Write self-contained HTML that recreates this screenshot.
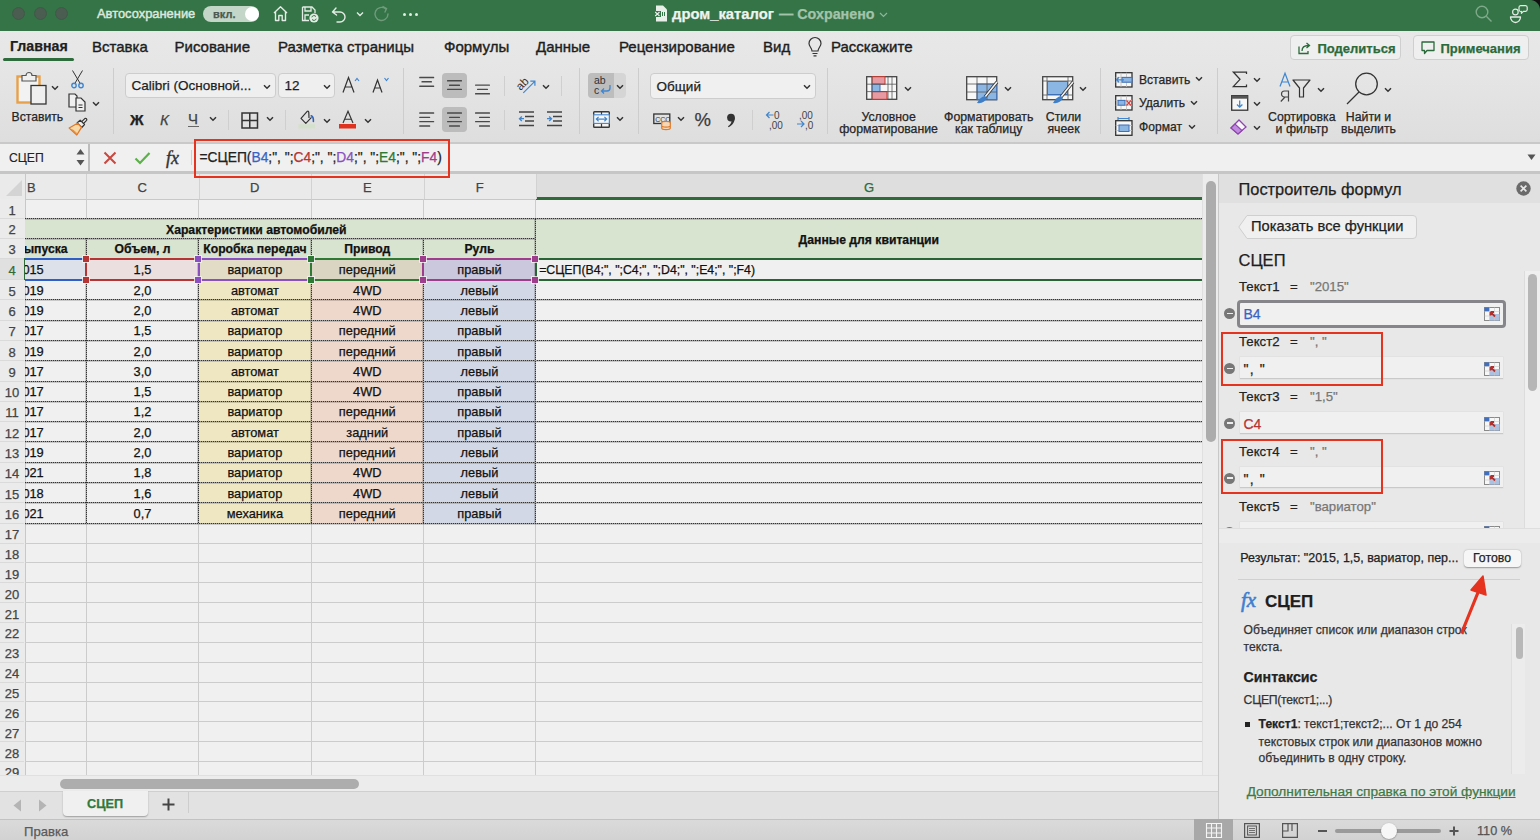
<!DOCTYPE html><html><head><meta charset="utf-8"><style>
*{box-sizing:border-box;margin:0;padding:0}
html,body{width:1540px;height:840px;overflow:hidden;background:#e6e6e6;font-family:"Liberation Sans",sans-serif;color:#262626}
.a{position:absolute}
.t{position:absolute;white-space:pre;line-height:1;-webkit-text-stroke-width:0.25px}
svg{position:absolute;overflow:visible}
</style></head><body>
<div class="a" style="left:0;top:0;width:1540px;height:31px;background:#357447"></div>
<div class="a" style="left:11.5px;top:7px;width:13px;height:13px;border-radius:50%;background:#4b5c50;border:1px solid #3f5a47"></div>
<div class="a" style="left:33.5px;top:7px;width:13px;height:13px;border-radius:50%;background:#4b5c50;border:1px solid #3f5a47"></div>
<div class="a" style="left:54.5px;top:7px;width:13px;height:13px;border-radius:50%;background:#4b5c50;border:1px solid #3f5a47"></div>
<div class="t" style="left:97px;top:8.3px;font-size:12.9px;color:#dce8df;-webkit-text-stroke-width:0.45px">Автосохранение</div>
<div class="a" style="left:203px;top:6px;width:56px;height:16px;border-radius:8px;background:#c3d6c8"></div>
<div class="t" style="left:213px;top:8.5px;font-size:11px;font-weight:bold;color:#4d5a50">вкл.</div>
<div class="a" style="left:245px;top:7px;width:14px;height:14px;border-radius:50%;background:#fff"></div>
<svg style="left:272px;top:5px" width="17" height="17" viewBox="0 0 17 17"><path d="M2 8 L8.5 1.8 L15 8 M3.5 6.8 V15.5 H6.8 V10.5 H10.2 V15.5 H13.5 V6.8" fill="none" stroke="#e3ece5" stroke-width="1.4" stroke-linejoin="round"/></svg>
<svg style="left:301px;top:5px" width="19" height="18" viewBox="0 0 19 18"><path d="M1.5 2 H11 L14 5 V8 M8 15.5 H1.5 V2 M4 2 V6 H10 V2 M4 15.5 V10 H8" fill="none" stroke="#e3ece5" stroke-width="1.3"/><circle cx="13" cy="13" r="4.6" fill="#e3ece5"/><path d="M10.8 12.3 a2.3 2.3 0 0 1 4.2 -0.6 M15.2 13.7 a2.3 2.3 0 0 1 -4.2 0.6" fill="none" stroke="#357447" stroke-width="1"/></svg>
<svg style="left:331px;top:5px" width="16" height="18" viewBox="0 0 16 18"><path d="M1.5 7 L5 3 M1.5 7 L5.5 10 M1.5 7 H9 A5 5 0 0 1 9 17 L6 17" fill="none" stroke="#e3ece5" stroke-width="1.4" stroke-linecap="round"/></svg>
<svg style="left:356px;top:11px" width="8" height="6" viewBox="0 0 8 6"><path d="M1 1.5 L4 4.5 L7 1.5" fill="none" stroke="#e3ece5" stroke-width="1.4"/></svg>
<svg style="left:373px;top:5px" width="18" height="18" viewBox="0 0 18 18"><path d="M15 9 A6.5 6.5 0 1 1 12.5 3.8 M10 1.5 L13.5 3.5 L12 7" fill="none" stroke="#6f9b7b" stroke-width="1.4" stroke-linecap="round"/></svg>
<div class="a" style="left:403.0px;top:12.5px;width:3px;height:3px;border-radius:50%;background:#e3ece5"></div>
<div class="a" style="left:409.0px;top:12.5px;width:3px;height:3px;border-radius:50%;background:#e3ece5"></div>
<div class="a" style="left:415.0px;top:12.5px;width:3px;height:3px;border-radius:50%;background:#e3ece5"></div>
<svg style="left:654px;top:5px" width="14" height="17" viewBox="0 0 14 17"><path d="M2 0.5 H9 L13 4.5 V16.5 H2 Z" fill="#e8efe9"/><rect x="0" y="6" width="7" height="6" fill="#357447"/><path d="M1.2 7 L5.5 11 M5.5 7 L1.2 11" stroke="#e8efe9" stroke-width="1.1"/><path d="M8.5 7 V11 M10.5 7 V11" stroke="#357447" stroke-width="1"/></svg>
<div class="t" style="left:672px;top:6.5px;font-size:14.8px;font-weight:bold;color:#eef3ef">дром_каталог</div>
<div class="t" style="left:779px;top:6.8px;font-size:14.3px;font-weight:bold;color:#a3c3ab">— Сохранено</div>
<svg style="left:879px;top:11.5px" width="9" height="6" viewBox="0 0 9 6"><path d="M1 1 L4.5 4.5 L8 1" fill="none" stroke="#8fb59a" stroke-width="1.2"/></svg>
<svg style="left:1475px;top:5px" width="18" height="18" viewBox="0 0 18 18"><circle cx="7" cy="7" r="5.8" fill="none" stroke="#7ea98a" stroke-width="1.4"/><path d="M11.3 11.3 L16.5 16.5" stroke="#7ea98a" stroke-width="1.4"/></svg>
<svg style="left:1508px;top:3px" width="22" height="22" viewBox="0 0 22 22"><circle cx="7.4" cy="9" r="2.8" fill="none" stroke="#e3ece5" stroke-width="1.2"/><path d="M2.5 14 H12.5 A5 5.5 0 0 1 2.5 14 Z" fill="none" stroke="#e3ece5" stroke-width="1.3" stroke-linejoin="round"/><path d="M12.6 2.6 H17.6 A1.8 1.8 0 0 1 19.2 4.4 V6.8 A1.8 1.8 0 0 1 17.6 8.4 H15.4 L13.4 10.3 V8.4 A1.8 1.8 0 0 1 11 6.6 V4.4 A1.8 1.8 0 0 1 12.6 2.6 Z" fill="none" stroke="#e3ece5" stroke-width="1.2" stroke-linejoin="round"/></svg>
<div class="a" style="left:1530px;top:0;width:10px;height:10px;background:radial-gradient(circle at 0 100%,transparent 9.5px,#111 10.5px)"></div>
<div class="a" style="left:0;top:31px;width:1540px;height:111px;background:linear-gradient(#e8e8e8,#e5e5e5 40%,#dedede)"></div>
<div class="t" style="left:10px;top:38.5px;font-size:14.2px;font-weight:bold;color:#1e1e1e">Главная</div>
<div class="t" style="left:92px;top:38.6px;font-size:15px;color:#1e1e1e;-webkit-text-stroke-width:0.4px">Вставка</div>
<div class="t" style="left:174.5px;top:38.6px;font-size:15px;color:#1e1e1e;-webkit-text-stroke-width:0.4px">Рисование</div>
<div class="t" style="left:278px;top:38.6px;font-size:15px;color:#1e1e1e;-webkit-text-stroke-width:0.4px">Разметка страницы</div>
<div class="t" style="left:444px;top:38.6px;font-size:15px;color:#1e1e1e;-webkit-text-stroke-width:0.4px">Формулы</div>
<div class="t" style="left:536px;top:38.6px;font-size:15px;color:#1e1e1e;-webkit-text-stroke-width:0.4px">Данные</div>
<div class="t" style="left:619px;top:38.6px;font-size:15px;color:#1e1e1e;-webkit-text-stroke-width:0.4px">Рецензирование</div>
<div class="t" style="left:763px;top:38.6px;font-size:15px;color:#1e1e1e;-webkit-text-stroke-width:0.4px">Вид</div>
<div class="t" style="left:831px;top:38.6px;font-size:15px;color:#1e1e1e;-webkit-text-stroke-width:0.4px">Расскажите</div>
<div class="a" style="left:3px;top:58px;width:71px;height:3px;border-radius:2px;background:#2e6b3c"></div>
<svg style="left:807px;top:37px" width="16" height="20" viewBox="0 0 16 20"><path d="M5 14 C5 11 2 9.5 2 6.5 A6 6 0 0 1 14 6.5 C14 9.5 11 11 11 14 Z M5.5 16.5 H10.5 M6.5 18.8 H9.5" fill="none" stroke="#333" stroke-width="1.2"/></svg>
<div class="a" style="left:1289.5px;top:35px;width:111px;height:25px;border-radius:4px;background:#efefef;border:1px solid #cfcfcf"></div>
<div class="t" style="left:1317.5px;top:42px;font-size:13px;font-weight:bold;color:#2b6a3a">Поделиться</div>
<svg style="left:1298px;top:41px" width="14" height="14" viewBox="0 0 14 14"><path d="M1 5.5 V12.5 H10 V10" fill="none" stroke="#2b6a3a" stroke-width="1.3"/><path d="M4 10 C4 6 7 4.5 10.5 4.5 M8.5 2 L11.5 4.5 L8.5 7" fill="none" stroke="#2b6a3a" stroke-width="1.3"/></svg>
<div class="a" style="left:1412.5px;top:35px;width:116px;height:25px;border-radius:4px;background:#efefef;border:1px solid #cfcfcf"></div>
<div class="t" style="left:1440.5px;top:42px;font-size:13px;font-weight:bold;color:#2b6a3a">Примечания</div>
<svg style="left:1421px;top:41px" width="14" height="14" viewBox="0 0 14 14"><path d="M1 1 H13 V9.5 H6 L3.5 12.5 V9.5 H1 Z" fill="none" stroke="#2b6a3a" stroke-width="1.3" stroke-linejoin="round"/></svg>
<svg style="left:16px;top:72px" width="32" height="34" viewBox="0 0 32 34"><rect x="1.5" y="4.5" width="22" height="26" fill="#f2f2f2" stroke="#e8a14a" stroke-width="2.4"/><path d="M6 9 V3.5 H10 A3 3 0 0 1 16 3.5 H20 V9 Z" fill="#efefef" stroke="#555" stroke-width="1.2"/><rect x="15" y="13.5" width="15" height="18.5" fill="#efefef" stroke="#333" stroke-width="1.3"/></svg>
<svg style="left:51px;top:85px" width="8" height="6" viewBox="0 0 8 6"><path d="M1 1.2 L4 4.2 L7 1.2" fill="none" stroke="#333" stroke-width="1.5"/></svg>
<div class="t" style="left:11.5px;top:110.5px;font-size:12.2px;font-weight:normal;color:#262626;">Вставить</div>
<svg style="left:71px;top:70px" width="13" height="19" viewBox="0 0 13 19"><path d="M1.5 0.5 L9.5 14 M11.5 0.5 L3.5 14" stroke="#333" stroke-width="1"/><circle cx="3" cy="15.5" r="2.2" fill="none" stroke="#3f86d0" stroke-width="1.4"/><circle cx="10" cy="15.5" r="2.2" fill="none" stroke="#3f86d0" stroke-width="1.4"/></svg>
<svg style="left:68px;top:93px" width="19" height="19" viewBox="0 0 19 19"><path d="M1 1 H7 L9 3 V14 H1 Z" fill="#f0f0f0" stroke="#333" stroke-width="1.2"/><path d="M8 5 H13 L17 9 V18 H8 Z" fill="#f0f0f0" stroke="#333" stroke-width="1.2"/><path d="M10.5 12 H14.5 M10.5 14.5 H14.5" stroke="#333" stroke-width="1"/></svg>
<svg style="left:92px;top:101px" width="8" height="6" viewBox="0 0 8 6"><path d="M1 1.2 L4 4.2 L7 1.2" fill="none" stroke="#333" stroke-width="1.5"/></svg>
<svg style="left:68px;top:116px" width="20" height="20" viewBox="0 0 20 20"><path d="M12.2 7.2 L16.8 2.6 A1.3 1.3 0 0 1 18.6 4.4 L14 9 Z" fill="#eee" stroke="#333" stroke-width="1.2" stroke-linejoin="round"/><path d="M9.2 6.8 L12.2 4.2 L16.5 8.5 L13.8 11.5 Z" fill="#eee" stroke="#333" stroke-width="1.2" stroke-linejoin="round"/><path d="M1.2 12 L9.5 7.2 L13.5 11.3 L8.8 19 Z" fill="#f6d9a6" stroke="#e07b2a" stroke-width="1.3" stroke-linejoin="round"/><path d="M4.5 13.5 L9.5 18" stroke="#e07b2a" stroke-width="0.8"/></svg>
<div class="a" style="left:113px;top:68px;width:1px;height:66px;background:#cdcdcd"></div>
<div class="a" style="left:125px;top:73px;width:151px;height:25px;border-radius:4px;background:#efefef;border:1px solid #cdcdcd"></div>
<div class="t" style="left:131.5px;top:79px;font-size:13.5px;font-weight:normal;color:#1e1e1e;">Calibri (Основной...</div>
<svg style="left:263px;top:84px" width="8" height="6" viewBox="0 0 8 6"><path d="M1 1.2 L4 4.2 L7 1.2" fill="none" stroke="#333" stroke-width="1.5"/></svg>
<div class="a" style="left:278px;top:73px;width:57px;height:25px;border-radius:4px;background:#efefef;border:1px solid #cdcdcd"></div>
<div class="t" style="left:284.5px;top:79px;font-size:13.5px;font-weight:normal;color:#1e1e1e;">12</div>
<svg style="left:323px;top:84px" width="8" height="6" viewBox="0 0 8 6"><path d="M1 1.2 L4 4.2 L7 1.2" fill="none" stroke="#333" stroke-width="1.5"/></svg>
<svg style="left:342px;top:76px" width="18" height="17" viewBox="0 0 18 17"><path d="M1 16.5 L6.5 1.5 L12 16.5 M3 11 H10" fill="none" stroke="#333" stroke-width="1.2"/><path d="M13 5 L15 2.5 L17 5" fill="none" stroke="#3f86d0" stroke-width="1.2"/></svg>
<svg style="left:372px;top:76px" width="18" height="17" viewBox="0 0 18 17"><path d="M1 16.5 L5.5 4 L10 16.5 M2.8 12 H8.2" fill="none" stroke="#333" stroke-width="1.2"/><path d="M12.5 2 L14.5 4.5 L16.5 2" fill="none" stroke="#3f86d0" stroke-width="1.2"/></svg>
<div class="t" style="left:130px;top:112px;font-size:15px;font-weight:bold;color:#222;">Ж</div>
<div class="t" style="left:160px;top:112px;font-size:15px;font-weight:normal;color:#444;font-style:italic">К</div>
<div class="t" style="left:188px;top:111px;font-size:15px;font-weight:normal;color:#444;">Ч</div>
<div class="a" style="left:188px;top:126px;width:11px;height:1px;background:#666"></div>
<svg style="left:209px;top:116px" width="8" height="6" viewBox="0 0 8 6"><path d="M1 1.2 L4 4.2 L7 1.2" fill="none" stroke="#333" stroke-width="1.5"/></svg>
<div class="a" style="left:228px;top:110px;width:1px;height:20px;background:#cfcfcf"></div>
<svg style="left:241px;top:112px" width="18" height="17" viewBox="0 0 18 17"><rect x="1" y="1" width="15.5" height="15" fill="none" stroke="#333" stroke-width="1.5"/><path d="M8.75 1 V16 M1 8.5 H16.5" stroke="#333" stroke-width="1.5"/></svg>
<svg style="left:266px;top:116px" width="8" height="6" viewBox="0 0 8 6"><path d="M1 1.2 L4 4.2 L7 1.2" fill="none" stroke="#333" stroke-width="1.5"/></svg>
<div class="a" style="left:285px;top:110px;width:1px;height:20px;background:#cfcfcf"></div>
<svg style="left:296px;top:108px" width="22" height="22" viewBox="0 0 22 22"><path d="M15.5 9.3 L9.8 15.3 L5 10.3 L11 3.6 Q12.5 2.5 12.8 4.5 L13 10" fill="none" stroke="#333" stroke-width="1.2" stroke-linejoin="round"/><path d="M15.2 7.8 Q17.6 8.6 17.4 13.5" fill="none" stroke="#2f62b8" stroke-width="1.6" stroke-linecap="round"/><rect x="2.4" y="16.2" width="16.6" height="4.3" fill="#d5e2cb"/></svg>
<svg style="left:323px;top:117.5px" width="8" height="6" viewBox="0 0 8 6"><path d="M1 1.2 L4 4.2 L7 1.2" fill="none" stroke="#333" stroke-width="1.5"/></svg>
<svg style="left:338px;top:110px" width="20" height="20" viewBox="0 0 20 20"><path d="M5 13 L10 1.3 L15 13 M6.6 9.2 H13.4" fill="none" stroke="#333" stroke-width="1.15"/><rect x="1" y="14" width="17" height="4.5" fill="#e0301e"/></svg>
<svg style="left:364px;top:117.5px" width="8" height="6" viewBox="0 0 8 6"><path d="M1 1.2 L4 4.2 L7 1.2" fill="none" stroke="#333" stroke-width="1.5"/></svg>
<div class="a" style="left:403px;top:68px;width:1px;height:66px;background:#cdcdcd"></div>
<div class="a" style="left:442px;top:73px;width:25px;height:25.3px;border-radius:4px;background:#bcbcbc"></div>
<div class="a" style="left:442px;top:107.2px;width:25px;height:25.3px;border-radius:4px;background:#bcbcbc"></div>
<svg style="left:0;top:0" width="520" height="140" viewBox="0 0 520 140"><g fill="#4a4a4a"><rect x="419.2" y="76.8" width="15" height="1.4" rx="0.5"/><rect x="421.45" y="81.1" width="10.5" height="1.4" rx="0.5"/><rect x="419.2" y="85.5" width="15" height="1.4" rx="0.5"/><rect x="447.0" y="80.1" width="15" height="1.4" rx="0.5"/><rect x="449.0" y="84.5" width="11" height="1.4" rx="0.5"/><rect x="447.0" y="88.7" width="15" height="1.4" rx="0.5"/><rect x="475.0" y="84.39999999999999" width="15" height="1.4" rx="0.5"/><rect x="477.0" y="88.7" width="11" height="1.4" rx="0.5"/><rect x="475.0" y="93.0" width="15" height="1.4" rx="0.5"/><rect x="419.2" y="112.3" width="15" height="1.4" rx="0.5"/><rect x="419.2" y="116.7" width="11" height="1.4" rx="0.5"/><rect x="419.2" y="120.89999999999999" width="15" height="1.4" rx="0.5"/><rect x="419.2" y="125.3" width="11" height="1.4" rx="0.5"/><rect x="447.0" y="112.3" width="15" height="1.4" rx="0.5"/><rect x="449.0" y="116.7" width="11" height="1.4" rx="0.5"/><rect x="447.0" y="120.89999999999999" width="15" height="1.4" rx="0.5"/><rect x="449.0" y="125.3" width="11" height="1.4" rx="0.5"/><rect x="475" y="112.3" width="15" height="1.4" rx="0.5"/><rect x="479" y="116.7" width="11" height="1.4" rx="0.5"/><rect x="475" y="120.89999999999999" width="15" height="1.4" rx="0.5"/><rect x="479" y="125.3" width="11" height="1.4" rx="0.5"/></g></svg>
<div class="a" style="left:504px;top:76px;width:1px;height:20px;background:#cfcfcf"></div>
<svg style="left:515px;top:75px" width="24" height="22" viewBox="0 0 24 22"><text x="5.5" y="16" transform="rotate(-45 5.5 16)" font-family="Liberation Sans" font-size="11.5" fill="#333">ab</text><path d="M8.3 17.8 L19.8 6.3 M15.3 6.2 H19.9 V10.8" fill="none" stroke="#3f86d0" stroke-width="1.2"/></svg>
<svg style="left:542px;top:84px" width="8" height="6" viewBox="0 0 8 6"><path d="M1 1.2 L4 4.2 L7 1.2" fill="none" stroke="#333" stroke-width="1.5"/></svg>
<div class="a" style="left:561px;top:76px;width:1px;height:20px;background:#cfcfcf"></div>
<div class="a" style="left:504px;top:110px;width:1px;height:20px;background:#cfcfcf"></div>
<svg style="left:518px;top:111px" width="17" height="16" viewBox="0 0 17 16"><path d="M1 1 H16 M7 5.5 H16 M7 10 H16 M1 14.5 H16" stroke="#444" stroke-width="1.4"/><path d="M6 7.7 H1.5 M3.8 5.5 L1.5 7.7 L3.8 10" fill="none" stroke="#3f86d0" stroke-width="1.3"/></svg>
<svg style="left:546px;top:111px" width="17" height="16" viewBox="0 0 17 16"><path d="M1 1 H16 M7 5.5 H16 M7 10 H16 M1 14.5 H16" stroke="#444" stroke-width="1.4"/><path d="M1 7.7 H5.5 M3.2 5.5 L5.5 7.7 L3.2 10" fill="none" stroke="#3f86d0" stroke-width="1.3"/></svg>
<div class="a" style="left:579px;top:68px;width:1px;height:66px;background:#cdcdcd"></div>
<div class="a" style="left:588px;top:73px;width:38px;height:25px;border-radius:4px;background:#d5d5d5"></div>
<div class="a" style="left:588px;top:73px;width:25.5px;height:25px;border-radius:4px 0 0 4px;background:#bdbdbd"></div>
<svg style="left:594px;top:75px" width="18" height="21" viewBox="0 0 18 21"><text x="0" y="9" font-family="Liberation Sans" font-size="10.5" fill="#333">ab</text><text x="0" y="19" font-family="Liberation Sans" font-size="10.5" fill="#333">c</text><path d="M16 10 V13 A3 3 0 0 1 13 16 H7.5 M10 13.5 L7.5 16 L10 18.5" fill="none" stroke="#3f86d0" stroke-width="1.3"/></svg>
<svg style="left:616px;top:84px" width="8" height="6" viewBox="0 0 8 6"><path d="M1 1.2 L4 4.2 L7 1.2" fill="none" stroke="#333" stroke-width="1.5"/></svg>
<svg style="left:593px;top:111px" width="17" height="17" viewBox="0 0 17 17"><rect x="0.7" y="0.7" width="15.6" height="15.6" rx="0.8" fill="#f4f4f4" stroke="#3a3a3a" stroke-width="1.4"/><path d="M8.5 0.7 V4 M8.5 12.5 V16.3" stroke="#3a3a3a" stroke-width="1.2"/><rect x="0.7" y="3.8" width="15.6" height="8.6" fill="#f7f7f7" stroke="#3f86d0" stroke-width="1.1"/><path d="M3.3 8.1 H13.7 M5.6 5.9 L3.3 8.1 L5.6 10.3 M11.4 5.9 L13.7 8.1 L11.4 10.3" fill="none" stroke="#3f86d0" stroke-width="1.2"/></svg>
<svg style="left:616px;top:116px" width="8" height="6" viewBox="0 0 8 6"><path d="M1 1.2 L4 4.2 L7 1.2" fill="none" stroke="#333" stroke-width="1.5"/></svg>
<div class="a" style="left:638px;top:68px;width:1px;height:66px;background:#cdcdcd"></div>
<div class="a" style="left:650px;top:73px;width:166px;height:25.5px;border-radius:4px;background:#f0f0f0;border:1px solid #cdcdcd"></div>
<div class="t" style="left:656.5px;top:79.5px;font-size:13.5px;font-weight:normal;color:#1e1e1e;">Общий</div>
<svg style="left:803px;top:84px" width="8" height="6" viewBox="0 0 8 6"><path d="M1 1.2 L4 4.2 L7 1.2" fill="none" stroke="#333" stroke-width="1.5"/></svg>
<svg style="left:653px;top:112px" width="19" height="18" viewBox="0 0 19 18"><rect x="0.8" y="2" width="16" height="9.5" fill="none" stroke="#333" stroke-width="1.3"/><text x="2.2" y="9.6" font-family="Liberation Sans" font-size="7" fill="#333">CCC</text><ellipse cx="13" cy="11" rx="4.3" ry="1.6" fill="#f5d8b8" stroke="#e07b2a" stroke-width="1.2"/><path d="M8.7 11 V16 A4.3 1.6 0 0 0 17.3 16 V11 M8.7 13.5 A4.3 1.6 0 0 0 17.3 13.5" fill="#f5d8b8" stroke="#e07b2a" stroke-width="1.2"/></svg>
<svg style="left:677px;top:116px" width="8" height="6" viewBox="0 0 8 6"><path d="M1 1.2 L4 4.2 L7 1.2" fill="none" stroke="#333" stroke-width="1.5"/></svg>
<div class="t" style="left:694.5px;top:110.5px;font-size:18.5px;font-weight:normal;color:#3a3a3a;">%</div>
<svg style="left:726px;top:113px" width="11" height="15" viewBox="0 0 11 15"><circle cx="5" cy="4.6" r="3.9" fill="#333"/><path d="M8.8 4.6 C9 9 6.5 12.5 2.5 14.3 L2 13.3 C4.5 11.5 5.6 9.5 5.6 7.5 Z" fill="#333"/></svg>
<div class="a" style="left:752px;top:110px;width:1px;height:20px;background:#cfcfcf"></div>
<svg style="left:765px;top:110px" width="20" height="19" viewBox="0 0 20 19"><text x="9" y="9" font-family="Liberation Sans" font-size="10" fill="#444">0</text><text x="4" y="18.5" font-family="Liberation Sans" font-size="10" fill="#444">,00</text><path d="M8.5 5 H1.5 M4.5 2 L1.5 5 L4.5 8" fill="none" stroke="#3f86d0" stroke-width="1.2"/></svg>
<svg style="left:796px;top:110px" width="20" height="19" viewBox="0 0 20 19"><text x="3" y="9" font-family="Liberation Sans" font-size="10" fill="#444">,00</text><text x="9" y="18.5" font-family="Liberation Sans" font-size="10" fill="#444">,0</text><path d="M1 14 H8 M5 11 L8 14 L5 17" fill="none" stroke="#3f86d0" stroke-width="1.2"/></svg>
<div class="a" style="left:827px;top:68px;width:1px;height:66px;background:#cdcdcd"></div>
<svg style="left:866px;top:76px" width="32" height="24" viewBox="0 0 32 24"><rect x="0.7" y="0.7" width="30" height="22.6" fill="#f7f7f7" stroke="#444" stroke-width="1.3"/><rect x="6" y="0.7" width="13" height="7.5" fill="#e89aa3" stroke="#c0392b" stroke-width="1"/><rect x="6" y="15.6" width="15" height="7.7" fill="#e89aa3" stroke="#c0392b" stroke-width="1"/><rect x="6" y="8.2" width="8" height="7.4" fill="#8bb6e3" stroke="#3f6fb5" stroke-width="1"/><path d="M6 0.7 V23.3 M22 0.7 V23.3 M26 0.7 V23.3 M0.7 8.2 H30.7 M0.7 15.6 H30.7" stroke="#555" stroke-width="0.8" fill="none"/></svg>
<svg style="left:904px;top:86px" width="8" height="6" viewBox="0 0 8 6"><path d="M1 1.2 L4 4.2 L7 1.2" fill="none" stroke="#333" stroke-width="1.5"/></svg>
<div class="t" style="left:828.6px;width:120px;text-align:center;top:110.5px;font-size:12.3px;color:#262626">Условное</div>
<div class="t" style="left:828.6px;width:120px;text-align:center;top:123px;font-size:12.3px;color:#262626">форматирование</div>
<svg style="left:966px;top:76px" width="33" height="29" viewBox="0 0 33 29"><rect x="0.7" y="0.7" width="30" height="23" fill="#f7f7f7" stroke="#444" stroke-width="1.3"/><rect x="11" y="8" width="19.7" height="15.7" fill="#8bb6e3" stroke="#3f6fb5" stroke-width="1"/><path d="M11 0.7 V23.7 M21 0.7 V23.7 M0.7 8 H30.7 M0.7 16 H30.7" stroke="#555" stroke-width="0.8"/><path d="M31 6 L19 21" stroke="#333" stroke-width="3.2"/><path d="M31 6 L19 21" stroke="#f3f3f3" stroke-width="1.6"/><path d="M19 20 Q14 21 11 27 Q18 28 21 22 Z" fill="#3f7fc8"/></svg>
<svg style="left:1004px;top:86px" width="8" height="6" viewBox="0 0 8 6"><path d="M1 1.2 L4 4.2 L7 1.2" fill="none" stroke="#333" stroke-width="1.5"/></svg>
<div class="t" style="left:928.7px;width:120px;text-align:center;top:110.5px;font-size:12.3px;color:#262626">Форматировать</div>
<div class="t" style="left:928.7px;width:120px;text-align:center;top:123px;font-size:12.3px;color:#262626">как таблицу</div>
<svg style="left:1042px;top:76px" width="33" height="29" viewBox="0 0 33 29"><rect x="0.7" y="0.7" width="30" height="23" fill="#f7f7f7" stroke="#444" stroke-width="1.3"/><path d="M5 0.7 V23.7 M26 0.7 V23.7 M0.7 5 H30.7 M0.7 19 H30.7" stroke="#555" stroke-width="0.8"/><rect x="5.5" y="5.5" width="20" height="13" fill="#8bb6e3" stroke="#3f6fb5" stroke-width="1"/><path d="M31 6 L19 21" stroke="#333" stroke-width="3.2"/><path d="M31 6 L19 21" stroke="#f3f3f3" stroke-width="1.6"/><path d="M19 20 Q14 21 11 27 Q18 28 21 22 Z" fill="#3f7fc8"/></svg>
<svg style="left:1079px;top:86px" width="8" height="6" viewBox="0 0 8 6"><path d="M1 1.2 L4 4.2 L7 1.2" fill="none" stroke="#333" stroke-width="1.5"/></svg>
<div class="t" style="left:1003.5px;width:120px;text-align:center;top:110.5px;font-size:12.3px;color:#262626">Стили</div>
<div class="t" style="left:1003.5px;width:120px;text-align:center;top:123px;font-size:12.3px;color:#262626">ячеек</div>
<div class="a" style="left:1100px;top:68px;width:1px;height:66px;background:#cdcdcd"></div>
<svg style="left:1115px;top:72px" width="18" height="16" viewBox="0 0 18 16"><rect x="0.7" y="0.7" width="16.3" height="14.3" fill="#f7f7f7" stroke="#333" stroke-width="1.3"/><path d="M6 0.7 V15 M11.5 0.7 V15 M0.7 5.4 H17 M0.7 10.2 H17" stroke="#bbb" stroke-width="0.8"/><rect x="7" y="5.4" width="10" height="4.8" fill="#8bb6e3" stroke="#3f6fb5" stroke-width="1"/><path d="M9 7.8 H1.5 M4 5.3 L1.5 7.8 L4 10.3" fill="none" stroke="#3f86d0" stroke-width="1.3"/></svg>
<div class="t" style="left:1139px;top:73.5px;font-size:12.1px;font-weight:normal;color:#262626;">Вставить</div>
<svg style="left:1195px;top:76px" width="8" height="6" viewBox="0 0 8 6"><path d="M1 1.2 L4 4.2 L7 1.2" fill="none" stroke="#333" stroke-width="1.5"/></svg>
<svg style="left:1115px;top:95px" width="18" height="16" viewBox="0 0 18 16"><rect x="0.7" y="0.7" width="16.3" height="14.3" fill="#f7f7f7" stroke="#333" stroke-width="1.3"/><path d="M6 0.7 V15 M11.5 0.7 V15 M0.7 5.4 H17 M0.7 10.2 H17" stroke="#bbb" stroke-width="0.8"/><rect x="3" y="5.4" width="7" height="4.8" fill="#8bb6e3" stroke="#3f6fb5" stroke-width="1"/><path d="M11.5 5.5 L16 10.5 M16 5.5 L11.5 10.5" stroke="#e03a3a" stroke-width="1.2"/></svg>
<div class="t" style="left:1139px;top:97px;font-size:12.1px;font-weight:normal;color:#262626;">Удалить</div>
<svg style="left:1190px;top:100px" width="8" height="6" viewBox="0 0 8 6"><path d="M1 1.2 L4 4.2 L7 1.2" fill="none" stroke="#333" stroke-width="1.5"/></svg>
<svg style="left:1115px;top:117px" width="18" height="19" viewBox="0 0 18 19"><path d="M3 1.5 H14 M3 0 V3 M14 0 V3" stroke="#3f86d0" stroke-width="1.2"/><rect x="0.7" y="3.7" width="16.3" height="14.6" fill="#f7f7f7" stroke="#333" stroke-width="1.3"/><path d="M0.7 8.5 H17 M0.7 13.5 H17" stroke="#bbb" stroke-width="0.8"/><rect x="4" y="8" width="10" height="6.5" fill="#8bb6e3" stroke="#3f6fb5" stroke-width="1"/></svg>
<div class="t" style="left:1139px;top:120.5px;font-size:12.1px;font-weight:normal;color:#262626;">Формат</div>
<svg style="left:1188px;top:124px" width="8" height="6" viewBox="0 0 8 6"><path d="M1 1.2 L4 4.2 L7 1.2" fill="none" stroke="#333" stroke-width="1.5"/></svg>
<div class="a" style="left:1217px;top:68px;width:1px;height:66px;background:#cdcdcd"></div>
<svg style="left:1232px;top:71px" width="16" height="17" viewBox="0 0 16 17"><path d="M14.5 3 V1 H1.3 L8 8.3 L1.3 15.6 H14.5 V13.6" fill="none" stroke="#333" stroke-width="1.25" stroke-linejoin="miter"/></svg>
<svg style="left:1253px;top:77px" width="8" height="6" viewBox="0 0 8 6"><path d="M1 1.2 L4 4.2 L7 1.2" fill="none" stroke="#333" stroke-width="1.5"/></svg>
<svg style="left:1231px;top:95px" width="18" height="16" viewBox="0 0 18 16"><rect x="0.7" y="0.7" width="16" height="14.5" fill="#f7f7f7" stroke="#333" stroke-width="1.3"/><rect x="0.7" y="0.7" width="16" height="3" fill="#555"/><path d="M8.7 5.5 V12 M6 9.5 L8.7 12.2 L11.4 9.5" fill="none" stroke="#3f86d0" stroke-width="1.3"/></svg>
<svg style="left:1253px;top:101px" width="8" height="6" viewBox="0 0 8 6"><path d="M1 1.2 L4 4.2 L7 1.2" fill="none" stroke="#333" stroke-width="1.5"/></svg>
<svg style="left:1230px;top:119px" width="18" height="16" viewBox="0 0 18 16"><path d="M1 9 L9 1 L16 8 L8 15 Z" fill="#f7f7f7" stroke="#8e44ad" stroke-width="1.3"/><path d="M1 9 L5 5 L12 11.5 L8 15 Z" fill="#c18be0" stroke="#8e44ad" stroke-width="1.1"/></svg>
<svg style="left:1253px;top:125px" width="8" height="6" viewBox="0 0 8 6"><path d="M1 1.2 L4 4.2 L7 1.2" fill="none" stroke="#333" stroke-width="1.5"/></svg>
<svg style="left:1279px;top:72px" width="13" height="31" viewBox="0 0 13 31"><path d="M1 14.5 L6 1.2 L11 14.5 M2.8 10 H9.2" fill="none" stroke="#3f86d0" stroke-width="1.2"/><path d="M9.5 29.5 V19 H5.5 A3 3 0 0 0 5.5 25 H9.5 M6 25 L1.8 29.5" fill="none" stroke="#444" stroke-width="1.2"/></svg>
<svg style="left:1292px;top:79px" width="20" height="20" viewBox="0 0 20 20"><path d="M1 1 H18 L11.5 9 V18 H7.5 V9 Z" fill="none" stroke="#333" stroke-width="1.2" stroke-linejoin="round"/></svg>
<svg style="left:1317px;top:87px" width="8" height="6" viewBox="0 0 8 6"><path d="M1 1.2 L4 4.2 L7 1.2" fill="none" stroke="#333" stroke-width="1.5"/></svg>
<div class="t" style="left:1241.8px;width:120px;text-align:center;top:110.5px;font-size:12.3px;color:#262626">Сортировка</div>
<div class="t" style="left:1241.8px;width:120px;text-align:center;top:123px;font-size:12.3px;color:#262626">и фильтр</div>
<svg style="left:1346px;top:72px" width="34" height="33" viewBox="0 0 34 33"><circle cx="20.5" cy="12" r="10.8" fill="none" stroke="#333" stroke-width="1.3"/><path d="M13 20 L1 32" stroke="#333" stroke-width="1.3"/></svg>
<svg style="left:1384px;top:87px" width="8" height="6" viewBox="0 0 8 6"><path d="M1 1.2 L4 4.2 L7 1.2" fill="none" stroke="#333" stroke-width="1.5"/></svg>
<div class="t" style="left:1308.5px;width:120px;text-align:center;top:110.5px;font-size:12.3px;color:#262626">Найти и</div>
<div class="t" style="left:1308.5px;width:120px;text-align:center;top:123px;font-size:12.3px;color:#262626">выделить</div>
<div class="a" style="left:0;top:142px;width:1540px;height:2px;background:#c9c9c9"></div>
<div class="a" style="left:0;top:144px;width:1540px;height:27px;background:#f0f0f0"></div>
<div class="a" style="left:0;top:171px;width:1540px;height:3px;background:#c6c6c6"></div>
<div class="a" style="left:88px;top:144px;width:1.5px;height:27px;background:#bdbdbd"></div>
<div class="t" style="left:9px;top:151.8px;font-size:12.2px;color:#222;-webkit-text-stroke:0.15px #222">СЦЕП</div>
<svg style="left:76px;top:148px" width="9" height="19" viewBox="0 0 9 19"><path d="M0.5 6.5 L4.5 1 L8.5 6.5 Z M0.5 12 L4.5 17.5 L8.5 12 Z" fill="#555"/></svg>
<svg style="left:103px;top:151px" width="14" height="14" viewBox="0 0 14 14"><path d="M1.5 1.5 L12.5 12.5 M12.5 1.5 L1.5 12.5" stroke="#c9473f" stroke-width="2"/></svg>
<svg style="left:134px;top:151px" width="17" height="14" viewBox="0 0 17 14"><path d="M1.5 7.5 L6 12 L15.5 2" fill="none" stroke="#5cb04a" stroke-width="2.2"/></svg>
<div class="t" style="left:166px;top:148.5px;font-family:'Liberation Serif',serif;font-style:italic;font-size:18px;color:#333;-webkit-text-stroke-width:0.4px">fx</div>
<div class="a" style="left:191px;top:150px;width:1px;height:15px;background:#cfcfcf"></div>
<div class="t" style="left:199.5px;top:151px;font-size:13.8px;color:#222"><span>=СЦЕП(</span><span style="color:#3a62c2">B4</span>;", ";<span style="color:#b53434">C4</span>;", ";<span style="color:#8a50bf">D4</span>;", ";<span style="color:#2e7a35">E4</span>;", ";<span style="color:#9e3d8b">F4</span>)</div>
<svg style="left:1527px;top:154px" width="9" height="7" viewBox="0 0 9 7"><path d="M0.5 0.5 H8.5 L4.5 6 Z" fill="#555"/></svg>
<div class="a" style="left:0;top:174px;width:1218px;height:601px;background:#f0f0f0"></div>
<div class="a" style="left:0;top:174px;width:1202px;height:25px;background:#eaeaea"></div>
<div class="a" style="left:0;top:198.5px;width:1202px;height:1.5px;background:#c8c8c8"></div>
<svg style="left:4px;top:180px" width="19" height="17" viewBox="0 0 19 17"><path d="M18 0 V16 H2 Z" fill="#d4d4d4"/></svg>
<div class="a" style="left:536px;top:174px;width:666px;height:25px;background:#dedede"></div>
<div class="a" style="left:536px;top:197px;width:666px;height:3px;background:#2e6b38"></div>
<div class="t" style="left:27px;top:180.5px;font-size:13px;color:#444">B</div>
<div class="t" style="left:86px;width:112.5px;text-align:center;top:180.5px;font-size:13px;color:#444">C</div>
<div class="a" style="left:86px;top:174px;width:1px;height:25px;background:#d2d2d2"></div>
<div class="t" style="left:198.5px;width:112.5px;text-align:center;top:180.5px;font-size:13px;color:#444">D</div>
<div class="a" style="left:198.5px;top:174px;width:1px;height:25px;background:#d2d2d2"></div>
<div class="t" style="left:311px;width:112.5px;text-align:center;top:180.5px;font-size:13px;color:#444">E</div>
<div class="a" style="left:311px;top:174px;width:1px;height:25px;background:#d2d2d2"></div>
<div class="t" style="left:423.5px;width:112.5px;text-align:center;top:180.5px;font-size:13px;color:#444">F</div>
<div class="a" style="left:423.5px;top:174px;width:1px;height:25px;background:#d2d2d2"></div>
<div class="t" style="left:536px;width:666px;text-align:center;top:180.5px;font-size:13px;color:#2e6b38">G</div>
<div class="a" style="left:536px;top:174px;width:1px;height:25px;background:#d2d2d2"></div>
<div class="a" style="left:0;top:199px;width:25px;height:576px;background:#ebebeb"></div>
<div class="a" style="left:24.5px;top:174px;width:1.5px;height:601px;background:#c8c8c8"></div>
<div class="t" style="left:0;width:24px;text-align:center;top:203.5px;font-size:13px;color:#444">1</div>
<div class="a" style="left:0;top:218px;width:24px;height:1px;background:#dadada"></div>
<div class="t" style="left:0;width:24px;text-align:center;top:223.0px;font-size:13px;color:#444">2</div>
<div class="a" style="left:0;top:238px;width:24px;height:1px;background:#dadada"></div>
<div class="t" style="left:0;width:24px;text-align:center;top:243.0px;font-size:13px;color:#444">3</div>
<div class="a" style="left:0;top:258px;width:24px;height:1px;background:#dadada"></div>
<div class="a" style="left:0;top:258.5px;width:24px;height:20.5px;background:#e0e0e0"></div>
<div class="a" style="left:23.5px;top:258.0px;width:2px;height:21.5px;background:#2e6b38"></div>
<div class="t" style="left:0;width:24px;text-align:center;top:263.5px;font-size:13px;color:#2e6b38">4</div>
<div class="a" style="left:0;top:279px;width:24px;height:1px;background:#dadada"></div>
<div class="t" style="left:0;width:24px;text-align:center;top:284.5px;font-size:13px;color:#444">5</div>
<div class="a" style="left:0;top:299px;width:24px;height:1px;background:#dadada"></div>
<div class="t" style="left:0;width:24px;text-align:center;top:304.5px;font-size:13px;color:#444">6</div>
<div class="a" style="left:0;top:320px;width:24px;height:1px;background:#dadada"></div>
<div class="t" style="left:0;width:24px;text-align:center;top:325.0px;font-size:13px;color:#444">7</div>
<div class="a" style="left:0;top:340px;width:24px;height:1px;background:#dadada"></div>
<div class="t" style="left:0;width:24px;text-align:center;top:345.5px;font-size:13px;color:#444">8</div>
<div class="a" style="left:0;top:360px;width:24px;height:1px;background:#dadada"></div>
<div class="t" style="left:0;width:24px;text-align:center;top:365.5px;font-size:13px;color:#444">9</div>
<div class="a" style="left:0;top:381px;width:24px;height:1px;background:#dadada"></div>
<div class="t" style="left:0;width:24px;text-align:center;top:386.0px;font-size:13px;color:#444">10</div>
<div class="a" style="left:0;top:401px;width:24px;height:1px;background:#dadada"></div>
<div class="t" style="left:0;width:24px;text-align:center;top:406.0px;font-size:13px;color:#444">11</div>
<div class="a" style="left:0;top:421px;width:24px;height:1px;background:#dadada"></div>
<div class="t" style="left:0;width:24px;text-align:center;top:426.5px;font-size:13px;color:#444">12</div>
<div class="a" style="left:0;top:441px;width:24px;height:1px;background:#dadada"></div>
<div class="t" style="left:0;width:24px;text-align:center;top:447.0px;font-size:13px;color:#444">13</div>
<div class="a" style="left:0;top:462px;width:24px;height:1px;background:#dadada"></div>
<div class="t" style="left:0;width:24px;text-align:center;top:467.0px;font-size:13px;color:#444">14</div>
<div class="a" style="left:0;top:482px;width:24px;height:1px;background:#dadada"></div>
<div class="t" style="left:0;width:24px;text-align:center;top:487.5px;font-size:13px;color:#444">15</div>
<div class="a" style="left:0;top:502px;width:24px;height:1px;background:#dadada"></div>
<div class="t" style="left:0;width:24px;text-align:center;top:508.0px;font-size:13px;color:#444">16</div>
<div class="a" style="left:0;top:523px;width:24px;height:1px;background:#dadada"></div>
<div class="t" style="left:0;width:24px;text-align:center;top:528.0px;font-size:13px;color:#444">17</div>
<div class="a" style="left:0;top:543px;width:24px;height:1px;background:#dadada"></div>
<div class="t" style="left:0;width:24px;text-align:center;top:547.5px;font-size:13px;color:#444">18</div>
<div class="a" style="left:0;top:562px;width:24px;height:1px;background:#dadada"></div>
<div class="t" style="left:0;width:24px;text-align:center;top:567.5px;font-size:13px;color:#444">19</div>
<div class="a" style="left:0;top:582px;width:24px;height:1px;background:#dadada"></div>
<div class="t" style="left:0;width:24px;text-align:center;top:587.5px;font-size:13px;color:#444">20</div>
<div class="a" style="left:0;top:602px;width:24px;height:1px;background:#dadada"></div>
<div class="t" style="left:0;width:24px;text-align:center;top:607.5px;font-size:13px;color:#444">21</div>
<div class="a" style="left:0;top:622px;width:24px;height:1px;background:#dadada"></div>
<div class="t" style="left:0;width:24px;text-align:center;top:627.0px;font-size:13px;color:#444">22</div>
<div class="a" style="left:0;top:642px;width:24px;height:1px;background:#dadada"></div>
<div class="t" style="left:0;width:24px;text-align:center;top:647.0px;font-size:13px;color:#444">23</div>
<div class="a" style="left:0;top:662px;width:24px;height:1px;background:#dadada"></div>
<div class="t" style="left:0;width:24px;text-align:center;top:667.0px;font-size:13px;color:#444">24</div>
<div class="a" style="left:0;top:682px;width:24px;height:1px;background:#dadada"></div>
<div class="t" style="left:0;width:24px;text-align:center;top:686.5px;font-size:13px;color:#444">25</div>
<div class="a" style="left:0;top:701px;width:24px;height:1px;background:#dadada"></div>
<div class="t" style="left:0;width:24px;text-align:center;top:706.5px;font-size:13px;color:#444">26</div>
<div class="a" style="left:0;top:721px;width:24px;height:1px;background:#dadada"></div>
<div class="t" style="left:0;width:24px;text-align:center;top:726.5px;font-size:13px;color:#444">27</div>
<div class="a" style="left:0;top:741px;width:24px;height:1px;background:#dadada"></div>
<div class="t" style="left:0;width:24px;text-align:center;top:746.5px;font-size:13px;color:#444">28</div>
<div class="a" style="left:0;top:761px;width:24px;height:1px;background:#dadada"></div>
<div class="t" style="left:0;width:24px;text-align:center;top:766.0px;font-size:13px;color:#444">29</div>
<div class="a" style="left:0;top:781px;width:24px;height:1px;background:#dadada"></div>
<div class="a" style="left:25px;top:218px;width:1177px;height:1px;background:#cccccc"></div>
<div class="a" style="left:25px;top:238px;width:1177px;height:1px;background:#cccccc"></div>
<div class="a" style="left:25px;top:258px;width:1177px;height:1px;background:#cccccc"></div>
<div class="a" style="left:25px;top:279px;width:1177px;height:1px;background:#cccccc"></div>
<div class="a" style="left:25px;top:299px;width:1177px;height:1px;background:#cccccc"></div>
<div class="a" style="left:25px;top:320px;width:1177px;height:1px;background:#cccccc"></div>
<div class="a" style="left:25px;top:340px;width:1177px;height:1px;background:#cccccc"></div>
<div class="a" style="left:25px;top:360px;width:1177px;height:1px;background:#cccccc"></div>
<div class="a" style="left:25px;top:381px;width:1177px;height:1px;background:#cccccc"></div>
<div class="a" style="left:25px;top:401px;width:1177px;height:1px;background:#cccccc"></div>
<div class="a" style="left:25px;top:421px;width:1177px;height:1px;background:#cccccc"></div>
<div class="a" style="left:25px;top:441px;width:1177px;height:1px;background:#cccccc"></div>
<div class="a" style="left:25px;top:462px;width:1177px;height:1px;background:#cccccc"></div>
<div class="a" style="left:25px;top:482px;width:1177px;height:1px;background:#cccccc"></div>
<div class="a" style="left:25px;top:502px;width:1177px;height:1px;background:#cccccc"></div>
<div class="a" style="left:25px;top:523px;width:1177px;height:1px;background:#cccccc"></div>
<div class="a" style="left:25px;top:543px;width:1177px;height:1px;background:#cccccc"></div>
<div class="a" style="left:25px;top:562px;width:1177px;height:1px;background:#cccccc"></div>
<div class="a" style="left:25px;top:582px;width:1177px;height:1px;background:#cccccc"></div>
<div class="a" style="left:25px;top:602px;width:1177px;height:1px;background:#cccccc"></div>
<div class="a" style="left:25px;top:622px;width:1177px;height:1px;background:#cccccc"></div>
<div class="a" style="left:25px;top:642px;width:1177px;height:1px;background:#cccccc"></div>
<div class="a" style="left:25px;top:662px;width:1177px;height:1px;background:#cccccc"></div>
<div class="a" style="left:25px;top:682px;width:1177px;height:1px;background:#cccccc"></div>
<div class="a" style="left:25px;top:701px;width:1177px;height:1px;background:#cccccc"></div>
<div class="a" style="left:25px;top:721px;width:1177px;height:1px;background:#cccccc"></div>
<div class="a" style="left:25px;top:741px;width:1177px;height:1px;background:#cccccc"></div>
<div class="a" style="left:25px;top:761px;width:1177px;height:1px;background:#cccccc"></div>
<div class="a" style="left:86px;top:199px;width:1px;height:576px;background:#cccccc"></div>
<div class="a" style="left:198px;top:199px;width:1px;height:576px;background:#cccccc"></div>
<div class="a" style="left:311px;top:199px;width:1px;height:576px;background:#cccccc"></div>
<div class="a" style="left:423px;top:199px;width:1px;height:576px;background:#cccccc"></div>
<div class="a" style="left:535px;top:199px;width:1px;height:576px;background:#cccccc"></div>
<div class="a" style="left:25px;top:218.8px;width:1177px;height:39.19999999999999px;background:#d8e3d0"></div>
<div class="a" style="left:198.6px;top:279.5px;width:112.6px;height:20.310000000000002px;background:#efe7c2"></div>
<div class="a" style="left:311.2px;top:279.5px;width:112.19999999999999px;height:20.310000000000002px;background:#eed8cb"></div>
<div class="a" style="left:423.4px;top:279.5px;width:112.20000000000005px;height:20.310000000000002px;background:#d2d8e5"></div>
<div class="a" style="left:198.6px;top:299.81px;width:112.6px;height:20.310000000000002px;background:#efe7c2"></div>
<div class="a" style="left:311.2px;top:299.81px;width:112.19999999999999px;height:20.310000000000002px;background:#eed8cb"></div>
<div class="a" style="left:423.4px;top:299.81px;width:112.20000000000005px;height:20.310000000000002px;background:#d2d8e5"></div>
<div class="a" style="left:198.6px;top:320.12px;width:112.6px;height:20.310000000000002px;background:#efe7c2"></div>
<div class="a" style="left:311.2px;top:320.12px;width:112.19999999999999px;height:20.310000000000002px;background:#eed8cb"></div>
<div class="a" style="left:423.4px;top:320.12px;width:112.20000000000005px;height:20.310000000000002px;background:#d2d8e5"></div>
<div class="a" style="left:198.6px;top:340.43px;width:112.6px;height:20.310000000000002px;background:#efe7c2"></div>
<div class="a" style="left:311.2px;top:340.43px;width:112.19999999999999px;height:20.310000000000002px;background:#eed8cb"></div>
<div class="a" style="left:423.4px;top:340.43px;width:112.20000000000005px;height:20.310000000000002px;background:#d2d8e5"></div>
<div class="a" style="left:198.6px;top:360.74px;width:112.6px;height:20.310000000000002px;background:#efe7c2"></div>
<div class="a" style="left:311.2px;top:360.74px;width:112.19999999999999px;height:20.310000000000002px;background:#eed8cb"></div>
<div class="a" style="left:423.4px;top:360.74px;width:112.20000000000005px;height:20.310000000000002px;background:#d2d8e5"></div>
<div class="a" style="left:198.6px;top:381.05px;width:112.6px;height:20.310000000000002px;background:#efe7c2"></div>
<div class="a" style="left:311.2px;top:381.05px;width:112.19999999999999px;height:20.310000000000002px;background:#eed8cb"></div>
<div class="a" style="left:423.4px;top:381.05px;width:112.20000000000005px;height:20.310000000000002px;background:#d2d8e5"></div>
<div class="a" style="left:198.6px;top:401.36px;width:112.6px;height:20.309999999999945px;background:#efe7c2"></div>
<div class="a" style="left:311.2px;top:401.36px;width:112.19999999999999px;height:20.309999999999945px;background:#eed8cb"></div>
<div class="a" style="left:423.4px;top:401.36px;width:112.20000000000005px;height:20.309999999999945px;background:#d2d8e5"></div>
<div class="a" style="left:198.6px;top:421.66999999999996px;width:112.6px;height:20.31000000000006px;background:#efe7c2"></div>
<div class="a" style="left:311.2px;top:421.66999999999996px;width:112.19999999999999px;height:20.31000000000006px;background:#eed8cb"></div>
<div class="a" style="left:423.4px;top:421.66999999999996px;width:112.20000000000005px;height:20.31000000000006px;background:#d2d8e5"></div>
<div class="a" style="left:198.6px;top:441.98px;width:112.6px;height:20.309999999999945px;background:#efe7c2"></div>
<div class="a" style="left:311.2px;top:441.98px;width:112.19999999999999px;height:20.309999999999945px;background:#eed8cb"></div>
<div class="a" style="left:423.4px;top:441.98px;width:112.20000000000005px;height:20.309999999999945px;background:#d2d8e5"></div>
<div class="a" style="left:198.6px;top:462.28999999999996px;width:112.6px;height:20.31000000000006px;background:#efe7c2"></div>
<div class="a" style="left:311.2px;top:462.28999999999996px;width:112.19999999999999px;height:20.31000000000006px;background:#eed8cb"></div>
<div class="a" style="left:423.4px;top:462.28999999999996px;width:112.20000000000005px;height:20.31000000000006px;background:#d2d8e5"></div>
<div class="a" style="left:198.6px;top:482.6px;width:112.6px;height:20.309999999999945px;background:#efe7c2"></div>
<div class="a" style="left:311.2px;top:482.6px;width:112.19999999999999px;height:20.309999999999945px;background:#eed8cb"></div>
<div class="a" style="left:423.4px;top:482.6px;width:112.20000000000005px;height:20.309999999999945px;background:#d2d8e5"></div>
<div class="a" style="left:198.6px;top:502.90999999999997px;width:112.6px;height:20.31000000000006px;background:#efe7c2"></div>
<div class="a" style="left:311.2px;top:502.90999999999997px;width:112.19999999999999px;height:20.31000000000006px;background:#eed8cb"></div>
<div class="a" style="left:423.4px;top:502.90999999999997px;width:112.20000000000005px;height:20.31000000000006px;background:#d2d8e5"></div>
<div class="a" style="left:25px;top:258.0px;width:61.400000000000006px;height:21.5px;background:#dde2ea"></div>
<div class="a" style="left:86.4px;top:258.0px;width:112.19999999999999px;height:21.5px;background:#ecdfdf"></div>
<div class="a" style="left:198.6px;top:258.0px;width:112.6px;height:21.5px;background:#e2dbc6"></div>
<div class="a" style="left:311.2px;top:258.0px;width:112.19999999999999px;height:21.5px;background:#dad5c3"></div>
<div class="a" style="left:423.4px;top:258.0px;width:112.20000000000005px;height:21.5px;background:#cbc7dc"></div>
<div class="a" style="left:25px;top:218px;width:1177px;height:1px;background:repeating-linear-gradient(90deg,#333333 0 1px,#a0a0a0 1px 2px)"></div><div class="a" style="left:25px;top:219px;width:1177px;height:1px;background:#000;opacity:0.16"></div>
<div class="a" style="left:25px;top:238px;width:510.6px;height:1px;background:repeating-linear-gradient(90deg,#333333 0 1px,#a0a0a0 1px 2px)"></div><div class="a" style="left:25px;top:239px;width:510.6px;height:1px;background:#000;opacity:0.16"></div>
<div class="a" style="left:535.6px;top:258px;width:666.4px;height:1px;background:repeating-linear-gradient(90deg,#333333 0 1px,#a0a0a0 1px 2px)"></div><div class="a" style="left:535.6px;top:259px;width:666.4px;height:1px;background:#000;opacity:0.16"></div>

<div class="a" style="left:25px;top:299px;width:1177px;height:1px;background:repeating-linear-gradient(90deg,#333333 0 1px,#a0a0a0 1px 2px)"></div><div class="a" style="left:25px;top:300px;width:1177px;height:1px;background:#000;opacity:0.16"></div>
<div class="a" style="left:25px;top:320px;width:1177px;height:1px;background:repeating-linear-gradient(90deg,#333333 0 1px,#a0a0a0 1px 2px)"></div><div class="a" style="left:25px;top:321px;width:1177px;height:1px;background:#000;opacity:0.16"></div>
<div class="a" style="left:25px;top:340px;width:1177px;height:1px;background:repeating-linear-gradient(90deg,#333333 0 1px,#a0a0a0 1px 2px)"></div><div class="a" style="left:25px;top:341px;width:1177px;height:1px;background:#000;opacity:0.16"></div>
<div class="a" style="left:25px;top:360px;width:1177px;height:1px;background:repeating-linear-gradient(90deg,#333333 0 1px,#a0a0a0 1px 2px)"></div><div class="a" style="left:25px;top:361px;width:1177px;height:1px;background:#000;opacity:0.16"></div>
<div class="a" style="left:25px;top:381px;width:1177px;height:1px;background:repeating-linear-gradient(90deg,#333333 0 1px,#a0a0a0 1px 2px)"></div><div class="a" style="left:25px;top:382px;width:1177px;height:1px;background:#000;opacity:0.16"></div>
<div class="a" style="left:25px;top:401px;width:1177px;height:1px;background:repeating-linear-gradient(90deg,#333333 0 1px,#a0a0a0 1px 2px)"></div><div class="a" style="left:25px;top:402px;width:1177px;height:1px;background:#000;opacity:0.16"></div>
<div class="a" style="left:25px;top:421px;width:1177px;height:1px;background:repeating-linear-gradient(90deg,#333333 0 1px,#a0a0a0 1px 2px)"></div><div class="a" style="left:25px;top:422px;width:1177px;height:1px;background:#000;opacity:0.16"></div>
<div class="a" style="left:25px;top:441px;width:1177px;height:1px;background:repeating-linear-gradient(90deg,#333333 0 1px,#a0a0a0 1px 2px)"></div><div class="a" style="left:25px;top:442px;width:1177px;height:1px;background:#000;opacity:0.16"></div>
<div class="a" style="left:25px;top:462px;width:1177px;height:1px;background:repeating-linear-gradient(90deg,#333333 0 1px,#a0a0a0 1px 2px)"></div><div class="a" style="left:25px;top:463px;width:1177px;height:1px;background:#000;opacity:0.16"></div>
<div class="a" style="left:25px;top:482px;width:1177px;height:1px;background:repeating-linear-gradient(90deg,#333333 0 1px,#a0a0a0 1px 2px)"></div><div class="a" style="left:25px;top:483px;width:1177px;height:1px;background:#000;opacity:0.16"></div>
<div class="a" style="left:25px;top:502px;width:1177px;height:1px;background:repeating-linear-gradient(90deg,#333333 0 1px,#a0a0a0 1px 2px)"></div><div class="a" style="left:25px;top:503px;width:1177px;height:1px;background:#000;opacity:0.16"></div>
<div class="a" style="left:25px;top:523px;width:1177px;height:1px;background:repeating-linear-gradient(90deg,#333333 0 1px,#a0a0a0 1px 2px)"></div><div class="a" style="left:25px;top:524px;width:1177px;height:1px;background:#000;opacity:0.16"></div>
<div class="a" style="left:86px;top:238.3px;width:1px;height:284.92px;background:repeating-linear-gradient(180deg,#333333 0 1px,#a0a0a0 1px 2px)"></div><div class="a" style="left:85px;top:238.3px;width:1px;height:284.92px;background:#000;opacity:0.16"></div>
<div class="a" style="left:198px;top:238.3px;width:1px;height:284.92px;background:repeating-linear-gradient(180deg,#333333 0 1px,#a0a0a0 1px 2px)"></div><div class="a" style="left:197px;top:238.3px;width:1px;height:284.92px;background:#000;opacity:0.16"></div>
<div class="a" style="left:311px;top:238.3px;width:1px;height:284.92px;background:repeating-linear-gradient(180deg,#333333 0 1px,#a0a0a0 1px 2px)"></div><div class="a" style="left:310px;top:238.3px;width:1px;height:284.92px;background:#000;opacity:0.16"></div>
<div class="a" style="left:423px;top:238.3px;width:1px;height:284.92px;background:repeating-linear-gradient(180deg,#333333 0 1px,#a0a0a0 1px 2px)"></div><div class="a" style="left:422px;top:238.3px;width:1px;height:284.92px;background:#000;opacity:0.16"></div>
<div class="a" style="left:535px;top:218.8px;width:1px;height:304.42px;background:repeating-linear-gradient(180deg,#333333 0 1px,#a0a0a0 1px 2px)"></div><div class="a" style="left:534px;top:218.8px;width:1px;height:304.42px;background:#000;opacity:0.16"></div>
<div class="a" style="left:25px;top:199px;width:61px;height:330px;overflow:hidden">
<div class="t" style="left:-45.5px;width:100px;text-align:center;top:44.4px;font-size:12.2px;font-weight:bold;color:#111">Год выпуска</div>
<div class="t" style="left:-27.5px;width:64px;text-align:center;top:64.7px;font-size:12.8px;color:#111">2015</div>
<div class="t" style="left:-27.5px;width:64px;text-align:center;top:85.6px;font-size:12.8px;color:#111">2019</div>
<div class="t" style="left:-27.5px;width:64px;text-align:center;top:105.9px;font-size:12.8px;color:#111">2019</div>
<div class="t" style="left:-27.5px;width:64px;text-align:center;top:126.2px;font-size:12.8px;color:#111">2017</div>
<div class="t" style="left:-27.5px;width:64px;text-align:center;top:146.5px;font-size:12.8px;color:#111">2019</div>
<div class="t" style="left:-27.5px;width:64px;text-align:center;top:166.8px;font-size:12.8px;color:#111">2017</div>
<div class="t" style="left:-27.5px;width:64px;text-align:center;top:187.1px;font-size:12.8px;color:#111">2017</div>
<div class="t" style="left:-27.5px;width:64px;text-align:center;top:207.4px;font-size:12.8px;color:#111">2017</div>
<div class="t" style="left:-27.5px;width:64px;text-align:center;top:227.7px;font-size:12.8px;color:#111">2017</div>
<div class="t" style="left:-27.5px;width:64px;text-align:center;top:248.0px;font-size:12.8px;color:#111">2019</div>
<div class="t" style="left:-27.5px;width:64px;text-align:center;top:268.3px;font-size:12.8px;color:#111">2021</div>
<div class="t" style="left:-27.5px;width:64px;text-align:center;top:288.7px;font-size:12.8px;color:#111">2018</div>
<div class="t" style="left:-27.5px;width:64px;text-align:center;top:309.0px;font-size:12.8px;color:#111">2021</div>
</div>
<div class="t" style="left:166px;top:223.8px;font-size:12.2px;font-weight:bold;color:#111">Характеристики автомобилей</div>
<div class="t" style="left:86.4px;width:112.19999999999999px;text-align:center;top:243.4px;font-size:12.2px;font-weight:bold;color:#111">Объем, л</div>
<div class="t" style="left:198.6px;width:112.6px;text-align:center;top:243.4px;font-size:12.2px;font-weight:bold;color:#111">Коробка передач</div>
<div class="t" style="left:311.2px;width:112.19999999999999px;text-align:center;top:243.4px;font-size:12.2px;font-weight:bold;color:#111">Привод</div>
<div class="t" style="left:423.4px;width:112.20000000000005px;text-align:center;top:243.4px;font-size:12.2px;font-weight:bold;color:#111">Руль</div>
<div class="t" style="left:535.6px;width:666.4px;text-align:center;top:233.6px;font-size:12.2px;font-weight:bold;color:#111">Данные для квитанции</div>
<div class="t" style="left:86.4px;width:112.19999999999999px;text-align:center;top:263.7px;font-size:12.8px;font-weight:normal;color:#111">1,5</div>
<div class="t" style="left:198.6px;width:112.6px;text-align:center;top:263.7px;font-size:12.8px;font-weight:normal;color:#111">вариатор</div>
<div class="t" style="left:311.2px;width:112.19999999999999px;text-align:center;top:263.7px;font-size:12.8px;font-weight:normal;color:#111">передний</div>
<div class="t" style="left:423.4px;width:112.20000000000005px;text-align:center;top:263.7px;font-size:12.8px;font-weight:normal;color:#111">правый</div>
<div class="t" style="left:86.4px;width:112.19999999999999px;text-align:center;top:284.6px;font-size:12.8px;font-weight:normal;color:#111">2,0</div>
<div class="t" style="left:198.6px;width:112.6px;text-align:center;top:284.6px;font-size:12.8px;font-weight:normal;color:#111">автомат</div>
<div class="t" style="left:311.2px;width:112.19999999999999px;text-align:center;top:284.6px;font-size:12.8px;font-weight:normal;color:#111">4WD</div>
<div class="t" style="left:423.4px;width:112.20000000000005px;text-align:center;top:284.6px;font-size:12.8px;font-weight:normal;color:#111">левый</div>
<div class="t" style="left:86.4px;width:112.19999999999999px;text-align:center;top:304.9px;font-size:12.8px;font-weight:normal;color:#111">2,0</div>
<div class="t" style="left:198.6px;width:112.6px;text-align:center;top:304.9px;font-size:12.8px;font-weight:normal;color:#111">автомат</div>
<div class="t" style="left:311.2px;width:112.19999999999999px;text-align:center;top:304.9px;font-size:12.8px;font-weight:normal;color:#111">4WD</div>
<div class="t" style="left:423.4px;width:112.20000000000005px;text-align:center;top:304.9px;font-size:12.8px;font-weight:normal;color:#111">левый</div>
<div class="t" style="left:86.4px;width:112.19999999999999px;text-align:center;top:325.2px;font-size:12.8px;font-weight:normal;color:#111">1,5</div>
<div class="t" style="left:198.6px;width:112.6px;text-align:center;top:325.2px;font-size:12.8px;font-weight:normal;color:#111">вариатор</div>
<div class="t" style="left:311.2px;width:112.19999999999999px;text-align:center;top:325.2px;font-size:12.8px;font-weight:normal;color:#111">передний</div>
<div class="t" style="left:423.4px;width:112.20000000000005px;text-align:center;top:325.2px;font-size:12.8px;font-weight:normal;color:#111">правый</div>
<div class="t" style="left:86.4px;width:112.19999999999999px;text-align:center;top:345.5px;font-size:12.8px;font-weight:normal;color:#111">2,0</div>
<div class="t" style="left:198.6px;width:112.6px;text-align:center;top:345.5px;font-size:12.8px;font-weight:normal;color:#111">вариатор</div>
<div class="t" style="left:311.2px;width:112.19999999999999px;text-align:center;top:345.5px;font-size:12.8px;font-weight:normal;color:#111">передний</div>
<div class="t" style="left:423.4px;width:112.20000000000005px;text-align:center;top:345.5px;font-size:12.8px;font-weight:normal;color:#111">правый</div>
<div class="t" style="left:86.4px;width:112.19999999999999px;text-align:center;top:365.8px;font-size:12.8px;font-weight:normal;color:#111">3,0</div>
<div class="t" style="left:198.6px;width:112.6px;text-align:center;top:365.8px;font-size:12.8px;font-weight:normal;color:#111">автомат</div>
<div class="t" style="left:311.2px;width:112.19999999999999px;text-align:center;top:365.8px;font-size:12.8px;font-weight:normal;color:#111">4WD</div>
<div class="t" style="left:423.4px;width:112.20000000000005px;text-align:center;top:365.8px;font-size:12.8px;font-weight:normal;color:#111">левый</div>
<div class="t" style="left:86.4px;width:112.19999999999999px;text-align:center;top:386.1px;font-size:12.8px;font-weight:normal;color:#111">1,5</div>
<div class="t" style="left:198.6px;width:112.6px;text-align:center;top:386.1px;font-size:12.8px;font-weight:normal;color:#111">вариатор</div>
<div class="t" style="left:311.2px;width:112.19999999999999px;text-align:center;top:386.1px;font-size:12.8px;font-weight:normal;color:#111">4WD</div>
<div class="t" style="left:423.4px;width:112.20000000000005px;text-align:center;top:386.1px;font-size:12.8px;font-weight:normal;color:#111">правый</div>
<div class="t" style="left:86.4px;width:112.19999999999999px;text-align:center;top:406.4px;font-size:12.8px;font-weight:normal;color:#111">1,2</div>
<div class="t" style="left:198.6px;width:112.6px;text-align:center;top:406.4px;font-size:12.8px;font-weight:normal;color:#111">вариатор</div>
<div class="t" style="left:311.2px;width:112.19999999999999px;text-align:center;top:406.4px;font-size:12.8px;font-weight:normal;color:#111">передний</div>
<div class="t" style="left:423.4px;width:112.20000000000005px;text-align:center;top:406.4px;font-size:12.8px;font-weight:normal;color:#111">правый</div>
<div class="t" style="left:86.4px;width:112.19999999999999px;text-align:center;top:426.7px;font-size:12.8px;font-weight:normal;color:#111">2,0</div>
<div class="t" style="left:198.6px;width:112.6px;text-align:center;top:426.7px;font-size:12.8px;font-weight:normal;color:#111">автомат</div>
<div class="t" style="left:311.2px;width:112.19999999999999px;text-align:center;top:426.7px;font-size:12.8px;font-weight:normal;color:#111">задний</div>
<div class="t" style="left:423.4px;width:112.20000000000005px;text-align:center;top:426.7px;font-size:12.8px;font-weight:normal;color:#111">правый</div>
<div class="t" style="left:86.4px;width:112.19999999999999px;text-align:center;top:447.0px;font-size:12.8px;font-weight:normal;color:#111">2,0</div>
<div class="t" style="left:198.6px;width:112.6px;text-align:center;top:447.0px;font-size:12.8px;font-weight:normal;color:#111">вариатор</div>
<div class="t" style="left:311.2px;width:112.19999999999999px;text-align:center;top:447.0px;font-size:12.8px;font-weight:normal;color:#111">передний</div>
<div class="t" style="left:423.4px;width:112.20000000000005px;text-align:center;top:447.0px;font-size:12.8px;font-weight:normal;color:#111">левый</div>
<div class="t" style="left:86.4px;width:112.19999999999999px;text-align:center;top:467.3px;font-size:12.8px;font-weight:normal;color:#111">1,8</div>
<div class="t" style="left:198.6px;width:112.6px;text-align:center;top:467.3px;font-size:12.8px;font-weight:normal;color:#111">вариатор</div>
<div class="t" style="left:311.2px;width:112.19999999999999px;text-align:center;top:467.3px;font-size:12.8px;font-weight:normal;color:#111">4WD</div>
<div class="t" style="left:423.4px;width:112.20000000000005px;text-align:center;top:467.3px;font-size:12.8px;font-weight:normal;color:#111">левый</div>
<div class="t" style="left:86.4px;width:112.19999999999999px;text-align:center;top:487.7px;font-size:12.8px;font-weight:normal;color:#111">1,6</div>
<div class="t" style="left:198.6px;width:112.6px;text-align:center;top:487.7px;font-size:12.8px;font-weight:normal;color:#111">вариатор</div>
<div class="t" style="left:311.2px;width:112.19999999999999px;text-align:center;top:487.7px;font-size:12.8px;font-weight:normal;color:#111">4WD</div>
<div class="t" style="left:423.4px;width:112.20000000000005px;text-align:center;top:487.7px;font-size:12.8px;font-weight:normal;color:#111">левый</div>
<div class="t" style="left:86.4px;width:112.19999999999999px;text-align:center;top:508.0px;font-size:12.8px;font-weight:normal;color:#111">0,7</div>
<div class="t" style="left:198.6px;width:112.6px;text-align:center;top:508.0px;font-size:12.8px;font-weight:normal;color:#111">механика</div>
<div class="t" style="left:311.2px;width:112.19999999999999px;text-align:center;top:508.0px;font-size:12.8px;font-weight:normal;color:#111">передний</div>
<div class="t" style="left:423.4px;width:112.20000000000005px;text-align:center;top:508.0px;font-size:12.8px;font-weight:normal;color:#111">правый</div>
<div class="t" style="left:539.2px;top:263.9px;font-size:12.3px;color:#111">=СЦЕП(B4;", ";C4;", ";D4;", ";E4;", ";F4)</div>
<div class="a" style="left:25px;top:257.5px;width:61.400000000000006px;height:2px;background:#2f5fc4"></div>
<div class="a" style="left:25px;top:278.5px;width:61.400000000000006px;height:2px;background:#2f5fc4"></div>
<div class="a" style="left:86.4px;top:257.5px;width:112.19999999999999px;height:2px;background:#b53434"></div>
<div class="a" style="left:86.4px;top:278.5px;width:112.19999999999999px;height:2px;background:#b53434"></div>
<div class="a" style="left:85.4px;top:258.5px;width:2px;height:21.0px;background:#b53434"></div>
<div class="a" style="left:198.6px;top:257.5px;width:112.6px;height:2px;background:#8a50bf"></div>
<div class="a" style="left:198.6px;top:278.5px;width:112.6px;height:2px;background:#8a50bf"></div>
<div class="a" style="left:197.6px;top:258.5px;width:2px;height:21.0px;background:#8a50bf"></div>
<div class="a" style="left:311.2px;top:257.5px;width:112.19999999999999px;height:2px;background:#2e7a35"></div>
<div class="a" style="left:311.2px;top:278.5px;width:112.19999999999999px;height:2px;background:#2e7a35"></div>
<div class="a" style="left:310.2px;top:258.5px;width:2px;height:21.0px;background:#2e7a35"></div>
<div class="a" style="left:423.4px;top:257.5px;width:112.20000000000005px;height:2px;background:#9e3d8b"></div>
<div class="a" style="left:423.4px;top:278.5px;width:112.20000000000005px;height:2px;background:#9e3d8b"></div>
<div class="a" style="left:422.4px;top:258.5px;width:2px;height:21.0px;background:#9e3d8b"></div>
<div class="a" style="left:535.6px;top:257.5px;width:666.4px;height:2px;background:#2a6434"></div>
<div class="a" style="left:535.6px;top:278.5px;width:666.4px;height:2px;background:#2a6434"></div>
<div class="a" style="left:534.6px;top:258.5px;width:2px;height:21.0px;background:#2a6434"></div>
<div class="a" style="left:82.9px;top:255.5px;width:6px;height:6px;background:#b53434;box-shadow:0 0 0 0.8px #f4f4f4"></div>
<div class="a" style="left:82.9px;top:276.5px;width:6px;height:6px;background:#b53434;box-shadow:0 0 0 0.8px #f4f4f4"></div>
<div class="a" style="left:195.1px;top:255.5px;width:6px;height:6px;background:#8a50bf;box-shadow:0 0 0 0.8px #f4f4f4"></div>
<div class="a" style="left:195.1px;top:276.5px;width:6px;height:6px;background:#8a50bf;box-shadow:0 0 0 0.8px #f4f4f4"></div>
<div class="a" style="left:307.7px;top:255.5px;width:6px;height:6px;background:#2e7a35;box-shadow:0 0 0 0.8px #f4f4f4"></div>
<div class="a" style="left:307.7px;top:276.5px;width:6px;height:6px;background:#2e7a35;box-shadow:0 0 0 0.8px #f4f4f4"></div>
<div class="a" style="left:419.9px;top:255.5px;width:6px;height:6px;background:#9e3d8b;box-shadow:0 0 0 0.8px #f4f4f4"></div>
<div class="a" style="left:419.9px;top:276.5px;width:6px;height:6px;background:#9e3d8b;box-shadow:0 0 0 0.8px #f4f4f4"></div>
<div class="a" style="left:532.1px;top:255.5px;width:6px;height:6px;background:#9e3d8b;box-shadow:0 0 0 0.8px #f4f4f4"></div>
<div class="a" style="left:532.1px;top:276.5px;width:6px;height:6px;background:#9e3d8b;box-shadow:0 0 0 0.8px #f4f4f4"></div>
<div class="a" style="left:1202px;top:174px;width:16px;height:601px;background:#ececec;border-left:1px solid #e0e0e0"></div>
<div class="a" style="left:1205.5px;top:181px;width:10px;height:261px;border-radius:5px;background:#acacac"></div>
<div class="a" style="left:0;top:775px;width:1218px;height:16px;background:#ececec;border-top:1px solid #e0e0e0"></div>
<div class="a" style="left:60px;top:779px;width:299px;height:9.5px;border-radius:5px;background:#adadad"></div>
<div class="a" style="left:193.5px;top:138.5px;width:256.5px;height:39px;border:2.5px solid #e5331f"></div>
<div class="a" style="left:1218px;top:174px;width:322px;height:645px;background:#e8e8e8;border-left:1px solid #c8c8c8"></div>
<div class="a" style="left:1219px;top:174px;width:321px;height:29px;background:#e0e0e0"></div>
<div class="t" style="left:1238.5px;top:181px;font-size:16.4px;color:#1e1e1e">Построитель формул</div>
<svg style="left:1516px;top:181px" width="15" height="15" viewBox="0 0 15 15"><circle cx="7.5" cy="7.5" r="7.2" fill="#6b6b6b"/><path d="M4.6 4.6 L10.4 10.4 M10.4 4.6 L4.6 10.4" stroke="#e8e8e8" stroke-width="1.6"/></svg>
<svg style="left:1238px;top:215px" width="179" height="24" viewBox="0 0 179 24"><path d="M9 0.5 H175 A3.5 3.5 0 0 1 178.5 4 V20 A3.5 3.5 0 0 1 175 23.5 H9 L0.8 12 Z" fill="#f0f0f0" stroke="#cfcfcf" stroke-width="1"/></svg>
<div class="t" style="left:1251px;top:218.5px;font-size:14.7px;color:#1e1e1e">Показать все функции</div>
<div class="t" style="left:1238.5px;top:252px;font-size:16.5px;color:#1e1e1e">СЦЕП</div>
<div class="a" style="left:1219px;top:271px;width:305px;height:257px;overflow:hidden">
<div class="t" style="left:20px;top:9.3px;font-size:13.2px;color:#222">Текст1</div>
<div class="t" style="left:71px;top:9.3px;font-size:13.2px;color:#222">=</div>
<div class="t" style="left:91px;top:9.3px;font-size:13.2px;color:#777">"2015"</div>
<div class="a" style="left:18px;top:29.0px;width:269px;height:28px;border-radius:4px;border:3px solid #86868a;background:#f0f0f0"></div>
<div class="t" style="left:24.5px;top:36.2px;font-size:14px;color:#3a62c2;letter-spacing:0px">B4</div>
<div class="a" style="left:5px;top:37.1px;width:11px;height:11px;border-radius:50%;background:#777"></div>
<div class="a" style="left:7.5px;top:41.7px;width:6px;height:1.8px;background:#eee"></div>
<svg style="left:265px;top:36.0px" width="16" height="14" viewBox="0 0 16 14"><rect x="0.5" y="0.5" width="15" height="13" fill="#f7f7f7" stroke="#8a8a8a" stroke-width="1"/><rect x="0.5" y="0.5" width="5" height="4" fill="#3f6fc0"/><rect x="5.5" y="7" width="10" height="6.5" fill="#a9c1e3"/><path d="M0.5 4.5 H15.5 M0.5 9 H15.5 M5.5 0.5 V13.5 M10.5 0.5 V13.5" stroke="#c9c9c9" stroke-width="0.6"/><path d="M6.5 5 L11 9.5 M6.5 5 V8.5 M6.5 5 H10" stroke="#b02f2f" stroke-width="1.8"/></svg>
<div class="t" style="left:20px;top:64.10000000000001px;font-size:13.2px;color:#222">Текст2</div>
<div class="t" style="left:71px;top:64.10000000000001px;font-size:13.2px;color:#222">=</div>
<div class="t" style="left:91px;top:64.10000000000001px;font-size:13.2px;color:#777">", "</div>
<div class="a" style="left:20.5px;top:86.4px;width:263px;height:21.4px;background:#f0f0f0;border-bottom:1px solid #c9c9c9;box-shadow:0 0 0 0.5px #dcdcdc"></div>
<div class="t" style="left:24.5px;top:91.00000000000001px;font-size:14px;color:#222;letter-spacing:1.2px">", "</div>
<div class="a" style="left:5px;top:91.9px;width:11px;height:11px;border-radius:50%;background:#777"></div>
<div class="a" style="left:7.5px;top:96.50000000000001px;width:6px;height:1.8px;background:#eee"></div>
<svg style="left:265px;top:90.80000000000001px" width="16" height="14" viewBox="0 0 16 14"><rect x="0.5" y="0.5" width="15" height="13" fill="#f7f7f7" stroke="#8a8a8a" stroke-width="1"/><rect x="0.5" y="0.5" width="5" height="4" fill="#3f6fc0"/><rect x="5.5" y="7" width="10" height="6.5" fill="#a9c1e3"/><path d="M0.5 4.5 H15.5 M0.5 9 H15.5 M5.5 0.5 V13.5 M10.5 0.5 V13.5" stroke="#c9c9c9" stroke-width="0.6"/><path d="M6.5 5 L11 9.5 M6.5 5 V8.5 M6.5 5 H10" stroke="#b02f2f" stroke-width="1.8"/></svg>
<div class="t" style="left:20px;top:118.90000000000002px;font-size:13.2px;color:#222">Текст3</div>
<div class="t" style="left:71px;top:118.90000000000002px;font-size:13.2px;color:#222">=</div>
<div class="t" style="left:91px;top:118.90000000000002px;font-size:13.2px;color:#777">"1,5"</div>
<div class="a" style="left:20.5px;top:141.20000000000002px;width:263px;height:21.4px;background:#f0f0f0;border-bottom:1px solid #c9c9c9;box-shadow:0 0 0 0.5px #dcdcdc"></div>
<div class="t" style="left:24.5px;top:145.8px;font-size:14px;color:#b53434;letter-spacing:0px">C4</div>
<div class="a" style="left:5px;top:146.70000000000002px;width:11px;height:11px;border-radius:50%;background:#777"></div>
<div class="a" style="left:7.5px;top:151.3px;width:6px;height:1.8px;background:#eee"></div>
<svg style="left:265px;top:145.60000000000002px" width="16" height="14" viewBox="0 0 16 14"><rect x="0.5" y="0.5" width="15" height="13" fill="#f7f7f7" stroke="#8a8a8a" stroke-width="1"/><rect x="0.5" y="0.5" width="5" height="4" fill="#3f6fc0"/><rect x="5.5" y="7" width="10" height="6.5" fill="#a9c1e3"/><path d="M0.5 4.5 H15.5 M0.5 9 H15.5 M5.5 0.5 V13.5 M10.5 0.5 V13.5" stroke="#c9c9c9" stroke-width="0.6"/><path d="M6.5 5 L11 9.5 M6.5 5 V8.5 M6.5 5 H10" stroke="#b02f2f" stroke-width="1.8"/></svg>
<div class="t" style="left:20px;top:173.7px;font-size:13.2px;color:#222">Текст4</div>
<div class="t" style="left:71px;top:173.7px;font-size:13.2px;color:#222">=</div>
<div class="t" style="left:91px;top:173.7px;font-size:13.2px;color:#777">", "</div>
<div class="a" style="left:20.5px;top:195.99999999999997px;width:263px;height:21.4px;background:#f0f0f0;border-bottom:1px solid #c9c9c9;box-shadow:0 0 0 0.5px #dcdcdc"></div>
<div class="t" style="left:24.5px;top:200.59999999999997px;font-size:14px;color:#222;letter-spacing:1.2px">", "</div>
<div class="a" style="left:5px;top:201.49999999999997px;width:11px;height:11px;border-radius:50%;background:#777"></div>
<div class="a" style="left:7.5px;top:206.09999999999997px;width:6px;height:1.8px;background:#eee"></div>
<svg style="left:265px;top:200.39999999999998px" width="16" height="14" viewBox="0 0 16 14"><rect x="0.5" y="0.5" width="15" height="13" fill="#f7f7f7" stroke="#8a8a8a" stroke-width="1"/><rect x="0.5" y="0.5" width="5" height="4" fill="#3f6fc0"/><rect x="5.5" y="7" width="10" height="6.5" fill="#a9c1e3"/><path d="M0.5 4.5 H15.5 M0.5 9 H15.5 M5.5 0.5 V13.5 M10.5 0.5 V13.5" stroke="#c9c9c9" stroke-width="0.6"/><path d="M6.5 5 L11 9.5 M6.5 5 V8.5 M6.5 5 H10" stroke="#b02f2f" stroke-width="1.8"/></svg>
<div class="t" style="left:20px;top:228.5px;font-size:13.2px;color:#222">Текст5</div>
<div class="t" style="left:71px;top:228.5px;font-size:13.2px;color:#222">=</div>
<div class="t" style="left:91px;top:228.5px;font-size:13.2px;color:#777">"вариатор"</div>
<div class="a" style="left:20.5px;top:250.79999999999998px;width:263px;height:21.4px;background:#f0f0f0;border-bottom:1px solid #c9c9c9;box-shadow:0 0 0 0.5px #dcdcdc"></div>
<div class="t" style="left:24.5px;top:255.39999999999998px;font-size:14px;color:#8a50bf;letter-spacing:0px">D4</div>
<div class="a" style="left:5px;top:256.3px;width:11px;height:11px;border-radius:50%;background:#777"></div>
<div class="a" style="left:7.5px;top:260.9px;width:6px;height:1.8px;background:#eee"></div>
<svg style="left:265px;top:255.2px" width="16" height="14" viewBox="0 0 16 14"><rect x="0.5" y="0.5" width="15" height="13" fill="#f7f7f7" stroke="#8a8a8a" stroke-width="1"/><rect x="0.5" y="0.5" width="5" height="4" fill="#3f6fc0"/><rect x="5.5" y="7" width="10" height="6.5" fill="#a9c1e3"/><path d="M0.5 4.5 H15.5 M0.5 9 H15.5 M5.5 0.5 V13.5 M10.5 0.5 V13.5" stroke="#c9c9c9" stroke-width="0.6"/><path d="M6.5 5 L11 9.5 M6.5 5 V8.5 M6.5 5 H10" stroke="#b02f2f" stroke-width="1.8"/></svg>
</div>
<div class="a" style="left:1524px;top:271px;width:16px;height:257px;background:#efefef;border-left:1px solid #dcdcdc"></div>
<div class="a" style="left:1528px;top:274px;width:9px;height:117px;border-radius:4.5px;background:#b6b6b6"></div>
<div class="a" style="left:1219px;top:528px;width:321px;height:15px;background:#ececec;border-top:1px solid #dedede"></div>
<div class="t" style="left:1240.3px;top:552.2px;font-size:12.46px;color:#222">Результат: "2015, 1,5, вариатор, пер...</div>
<div class="a" style="left:1463.5px;top:549.5px;width:57px;height:17.5px;border-radius:4px;background:#f6f6f6;box-shadow:0 0.5px 1.5px rgba(0,0,0,0.35)"></div>
<div class="t" style="left:1463.5px;width:57px;text-align:center;top:552.4px;font-size:12.3px;color:#222">Готово</div>
<div class="a" style="left:1238px;top:578.5px;width:282px;height:1px;background:#d0d0d0"></div>
<div class="t" style="left:1241px;top:590px;font-family:'Liberation Serif',serif;font-style:italic;font-size:21px;color:#3f7fd0;-webkit-text-stroke-width:0.6px">fx</div>
<div class="t" style="left:1265px;top:592.6px;font-size:17px;font-weight:bold;color:#1e1e1e">СЦЕП</div>
<div class="t" style="left:1243.6px;top:623.6px;font-size:12.1px;color:#333">Объединяет список или диапазон строк</div>
<div class="t" style="left:1243.6px;top:640.8px;font-size:12.1px;color:#333">текста.</div>
<div class="t" style="left:1243.6px;top:670px;font-size:14.2px;font-weight:bold;color:#222">Синтаксис</div>
<div class="t" style="left:1243.6px;top:693.8px;font-size:12.2px;letter-spacing:-0.25px;color:#333">СЦЕП(текст1;...)</div>
<div class="a" style="left:1244.5px;top:722px;width:5px;height:5px;background:#222"></div>
<div class="t" style="left:1258.6px;top:718.1px;font-size:12.1px;color:#333"><b style="color:#222">Текст1</b>: текст1;текст2;... От 1 до 254</div>
<div class="t" style="left:1258.6px;top:735.5px;font-size:12.1px;color:#333">текстовых строк или диапазонов можно</div>
<div class="t" style="left:1258.6px;top:752.2px;font-size:12.1px;color:#333">объединить в одну строку.</div>
<div class="a" style="left:1511px;top:624px;width:14px;height:150px;background:#ececec;border-left:1px solid #dedede"></div>
<div class="a" style="left:1516px;top:627px;width:7px;height:32px;border-radius:3.5px;background:#b8b8b8"></div>
<div class="t" style="left:1246.7px;top:785.2px;font-size:13.67px;color:#3d7a45;text-decoration:underline">Дополнительная справка по этой функции</div>
<div class="a" style="left:1221px;top:331.5px;width:161.5px;height:54.5px;border:2px solid #e5331f"></div>
<div class="a" style="left:1221px;top:439px;width:161.5px;height:55px;border:2px solid #e5331f"></div>
<svg style="left:1455px;top:570px" width="40" height="70" viewBox="0 0 40 70"><path d="M7 62 L24 20" stroke="#e5331f" stroke-width="3.2" stroke-linecap="round"/><path d="M28 6 L16 20 L31 25 Z" fill="#e5331f" stroke="#e5331f" stroke-width="1.5" stroke-linejoin="round"/></svg>
<div class="a" style="left:0;top:790.5px;width:1218px;height:28.5px;background:#e2e2e2;border-top:1px solid #cfcfcf"></div>
<svg style="left:13px;top:799px" width="9" height="13" viewBox="0 0 9 13"><path d="M8 0.5 V12.5 L0.5 6.5 Z" fill="#b4b4b4"/></svg>
<svg style="left:38px;top:799px" width="9" height="13" viewBox="0 0 9 13"><path d="M1 0.5 V12.5 L8.5 6.5 Z" fill="#b4b4b4"/></svg>
<div class="a" style="left:62.5px;top:790.5px;width:85px;height:25.5px;background:#f0f0f0;border-radius:0 0 4px 4px;box-shadow:0 1px 1.5px rgba(0,0,0,0.3)"></div>
<div class="t" style="left:62.5px;width:85px;text-align:center;top:797.9px;font-size:12.7px;font-weight:bold;color:#2e7a3e">СЦЕП</div>
<svg style="left:162px;top:798px" width="13" height="13" viewBox="0 0 13 13"><path d="M6.5 0.5 V12.5 M0.5 6.5 H12.5" stroke="#444" stroke-width="2"/></svg>
<div class="a" style="left:187.5px;top:792px;width:1px;height:21px;background:#cdcdcd"></div>
<div class="a" style="left:0;top:818.5px;width:1540px;height:21.5px;background:linear-gradient(#dadada,#d2d2d2);border-top:1px solid #c2c2c2"></div>
<div class="t" style="left:24px;top:824.5px;font-size:13.1px;color:#5a5a5a">Правка</div>
<div class="a" style="left:1194px;top:819px;width:39px;height:21px;background:#a8a8a8"></div>
<svg style="left:1206px;top:823px" width="16" height="15" viewBox="0 0 16 15"><path d="M0.5 0.5 H15.5 V14.5 H0.5 Z M5.5 0.5 V14.5 M10.5 0.5 V14.5 M0.5 5 H15.5 M0.5 10 H15.5" fill="none" stroke="#f4f4f4" stroke-width="1.1"/></svg>
<svg style="left:1244px;top:823px" width="16" height="15" viewBox="0 0 16 15"><rect x="0.6" y="0.6" width="14.8" height="13.8" fill="none" stroke="#555" stroke-width="1.2"/><rect x="3.6" y="3" width="8.8" height="9" fill="none" stroke="#555" stroke-width="1"/><path d="M5 5.5 H11 M5 7.5 H11 M5 9.5 H11" stroke="#555" stroke-width="0.8"/></svg>
<svg style="left:1282px;top:823px" width="16" height="15" viewBox="0 0 16 15"><path d="M0.6 0.6 H15.4 V14.4 H0.6 Z M6 0.6 V8 H0.6 M10 0.6 V8" fill="none" stroke="#555" stroke-width="1.2"/></svg>
<div class="a" style="left:1318px;top:830px;width:9px;height:2px;background:#555"></div>
<div class="a" style="left:1334.5px;top:829px;width:106px;height:4px;border-radius:2px;background:#9a9a9a"></div>
<div class="a" style="left:1381px;top:823px;width:16px;height:16px;border-radius:50%;background:#f7f7f7;box-shadow:0 0.5px 1.5px rgba(0,0,0,0.4)"></div>
<svg style="left:1448.5px;top:826px" width="10" height="10" viewBox="0 0 10 10"><path d="M5 0.5 V9.5 M0.5 5 H9.5" stroke="#555" stroke-width="2"/></svg>
<div class="t" style="left:1477px;top:824.7px;font-size:12.7px;color:#555">110 %</div>
</body></html>
